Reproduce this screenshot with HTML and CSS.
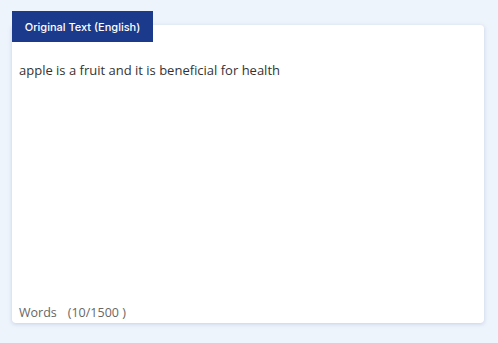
FILE: index.html
```html
<!DOCTYPE html>
<html>
<head>
<meta charset="utf-8">
<link rel="stylesheet" href="styles.css">
</head>
<body>
<div class="wrap">
  <div class="tab">Original Text (English)</div>
  <div class="card">
    <div class="text">apple is a fruit and it is beneficial for health</div>
    <div class="count"><span class="lbl">Words</span><span class="num">(10/1500 )</span></div>
  </div>
</div>
</body>
</html>
```

FILE: styles.css
```css
html, body { margin: 0; padding: 0; }
body {
  background: #eef4fc;
  width: 498px;
  height: 343px;
  overflow: hidden;
  font-family: "Open Sans", "DejaVu Sans", sans-serif;
}
.wrap {
  position: relative;
  padding: 25px 14px 20px 12px;
}
.tab {
  position: absolute;
  left: 12px;
  top: 11px;
  width: 141px;
  height: 31px;
  background: #1b3a8c;
  color: #fff;
  font-family: "Inter", "Open Sans", sans-serif;
  font-size: 11px;
  font-weight: 500;
  display: flex;
  align-items: center;
  justify-content: center;
  z-index: 2;
}
.card {
  background: #fff;
  height: 298px;
  border-radius: 4px;
  box-shadow: 0 1px 4px rgba(120,140,180,0.35);
  display: flex;
  flex-direction: column;
  justify-content: space-between;
  padding: 0 7px;
  box-sizing: border-box;
}
.text {
  margin-top: 36px;
  font-size: 13px;
  color: #333;
}
.count {
  margin-bottom: 2px;
  font-size: 12.5px;
  color: #666;
  display: flex;
  gap: 11px;
}
```
